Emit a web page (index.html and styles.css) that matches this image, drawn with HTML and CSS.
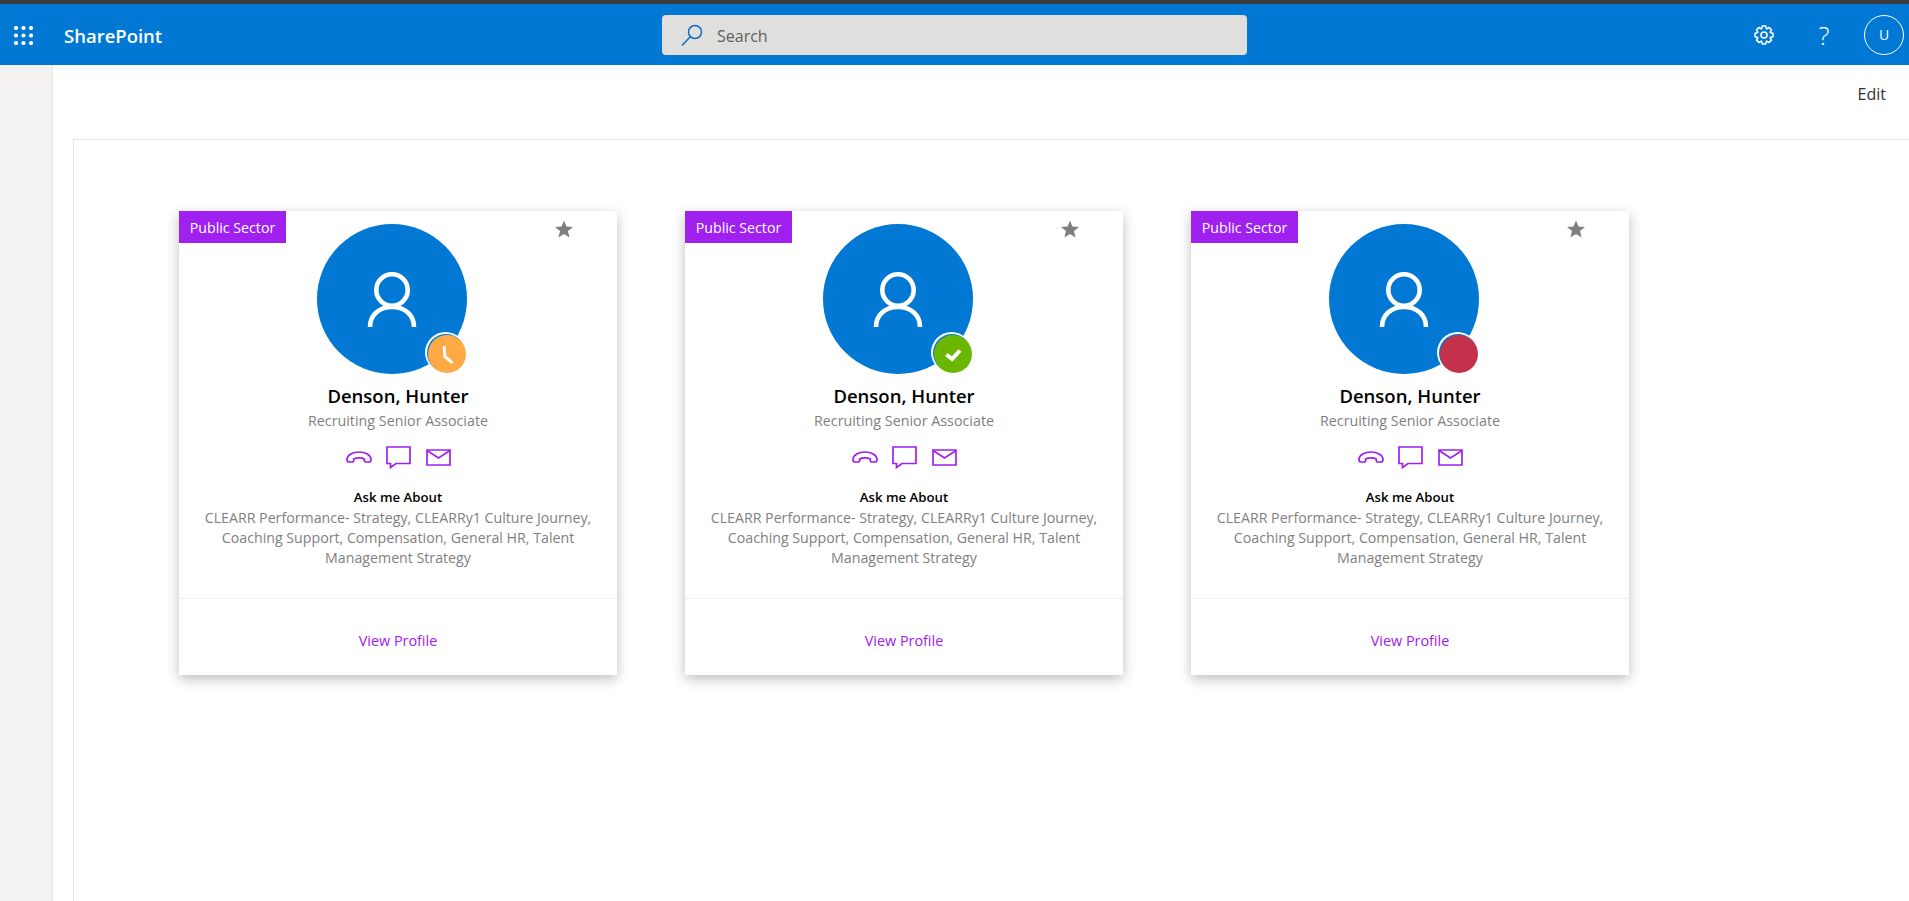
FILE: index.html
```html
<!DOCTYPE html>
<html lang="en">
<head>
    <meta charset="UTF-8">
    <title>SharePoint</title>
    <link rel="stylesheet" href="styles.css">
</head>
<body>
    <div class="topline"></div>
    <header class="suitebar">
        <div class="suite-left">
            <svg class="waffle" width="19" height="19" viewBox="0 0 19 19" fill="#fff">
                <circle cx="2" cy="2" r="2.100"/><circle cx="9.500" cy="2" r="2.100"/><circle cx="17" cy="2" r="2.100"/>
                <circle cx="2" cy="9.500" r="2.100"/><circle cx="9.500" cy="9.500" r="2.100"/><circle cx="17" cy="9.500" r="2.100"/>
                <circle cx="2" cy="17" r="2.100"/><circle cx="9.500" cy="17" r="2.100"/><circle cx="17" cy="17" r="2.100"/>
            </svg>
            <span class="brand">SharePoint</span>
        </div>
        <div class="searchbox">
            <svg width="24" height="24" viewBox="0 0 24 24" fill="none" stroke="#0f6cbd" stroke-width="1.500">
                <circle cx="15" cy="9" r="6.500"/>
                <path d="M10.500 13.500 2 22.500"/>
            </svg>
            <span class="search-text">Search</span>
        </div>
        <div class="suite-right">
            <svg class="gear" width="20" height="20" viewBox="0 0 22 22" fill="none" stroke="#fff" stroke-width="1.700" stroke-linejoin="round">
                <path d="M12.910 1.180 13.650 4.090 14.010 4.240 16.590 2.710 19.290 5.410 17.760 7.990 17.910 8.350 20.820 9.090V12.910L17.910 13.650 17.760 14.010 19.290 16.590 16.590 19.290 14.010 17.760 13.650 17.910 12.910 20.820H9.090L8.350 17.910 7.990 17.760 5.410 19.290 2.710 16.590 4.240 14.010 4.090 13.650 1.180 12.910V9.090L4.090 8.350 4.240 7.990 2.710 5.410 5.410 2.710 7.990 4.240 8.350 4.090 9.090 1.180z"/>
                <circle cx="11" cy="11" r="3.300"/>
            </svg>
            <span class="help">?</span>
            <span class="avatar">U</span>
        </div>
    </header>

    <div class="page">
        <aside class="rail"></aside>
        <main class="content">
            <div class="commandbar"><span>Edit</span></div>
            <section class="zone">
                <div class="cards">

                    <article class="card">
                        <span class="tag">Public Sector</span>
                        <svg class="star" width="18" height="18" viewBox="0 0 20 19" fill="#7f7f7f"><path d="M10 0l2.700 6.700 7.300.5-5.600 4.600 1.800 7.100L10 15l-6.200 3.900 1.800-7.100L0 7.200l7.300-.5z"/></svg>
                        <div class="photo">
                            <svg width="50" height="55" viewBox="0 0 50 55" fill="none" stroke="#fff" stroke-width="4.600">
                                <circle cx="25" cy="18" r="15.700"/>
                                <path d="M3 55c0-12 9-20 22-20s22 8 22 20"/>
                            </svg>
                            <span class="presence away">
                                <svg width="38" height="38" viewBox="0 0 38 38" fill="none" stroke="#fff" stroke-width="3" stroke-linecap="round" stroke-linejoin="round"><path d="M16.300 12.500 16.800 21.500 23.500 27"/></svg>
                            </span>
                        </div>
                        <h3 class="name">Denson, Hunter</h3>
                        <p class="role">Recruiting Senior Associate</p>
                        <div class="actions">
                            <svg width="26" height="12" viewBox="0 0 26 12" fill="none" stroke="#a020f0" stroke-width="1.700"><path d="M1 8.500C1 4 7 1 13 1s12 3 12 7.500c0 1.500-.8 2.500-2 2.500h-3c-1.200 0-1.700-.6-1.700-1.600V8c-1-.7-3-1.200-5.300-1.200S8.700 7.300 7.700 8v1.400c0 1-.5 1.600-1.700 1.600H3c-1.200 0-2-1-2-2.500z"/></svg>
                            <svg width="25" height="23" viewBox="0 0 25 23" fill="none" stroke="#a020f0" stroke-width="1.700"><path d="M1 1h23v16.500H10L4.500 21.500v-4H1z"/></svg>
                            <svg width="25" height="17" viewBox="0 0 25 17" fill="none" stroke="#a020f0" stroke-width="1.700"><path d="M1 1h23v15H1z"/><path d="M1 1.500l11.500 7.500L24 1.500"/></svg>
                        </div>
                        <h4 class="ask">Ask me About</h4>
                        <p class="topics">CLEARR Performance- Strategy, CLEARRy1 Culture Journey, Coaching Support, Compensation, General HR, Talent Management Strategy</p>
                        <div class="card-foot"><a href="#">View Profile</a></div>
                    </article>

                    <article class="card">
                        <span class="tag">Public Sector</span>
                        <svg class="star" width="18" height="18" viewBox="0 0 20 19" fill="#7f7f7f"><path d="M10 0l2.700 6.700 7.300.5-5.600 4.600 1.800 7.100L10 15l-6.200 3.900 1.800-7.100L0 7.200l7.300-.5z"/></svg>
                        <div class="photo">
                            <svg width="50" height="55" viewBox="0 0 50 55" fill="none" stroke="#fff" stroke-width="4.600">
                                <circle cx="25" cy="18" r="15.700"/>
                                <path d="M3 55c0-12 9-20 22-20s22 8 22 20"/>
                            </svg>
                            <span class="presence online">
                                <svg width="38" height="38" viewBox="0 0 38 38" fill="none" stroke="#fff" stroke-width="4"><path d="M12.500 19.500 18 24 26 15.500"/></svg>
                            </span>
                        </div>
                        <h3 class="name">Denson, Hunter</h3>
                        <p class="role">Recruiting Senior Associate</p>
                        <div class="actions">
                            <svg width="26" height="12" viewBox="0 0 26 12" fill="none" stroke="#a020f0" stroke-width="1.700"><path d="M1 8.500C1 4 7 1 13 1s12 3 12 7.500c0 1.500-.8 2.500-2 2.500h-3c-1.200 0-1.700-.6-1.700-1.600V8c-1-.7-3-1.200-5.300-1.200S8.700 7.300 7.700 8v1.400c0 1-.5 1.600-1.700 1.600H3c-1.200 0-2-1-2-2.500z"/></svg>
                            <svg width="25" height="23" viewBox="0 0 25 23" fill="none" stroke="#a020f0" stroke-width="1.700"><path d="M1 1h23v16.500H10L4.500 21.500v-4H1z"/></svg>
                            <svg width="25" height="17" viewBox="0 0 25 17" fill="none" stroke="#a020f0" stroke-width="1.700"><path d="M1 1h23v15H1z"/><path d="M1 1.500l11.500 7.500L24 1.500"/></svg>
                        </div>
                        <h4 class="ask">Ask me About</h4>
                        <p class="topics">CLEARR Performance- Strategy, CLEARRy1 Culture Journey, Coaching Support, Compensation, General HR, Talent Management Strategy</p>
                        <div class="card-foot"><a href="#">View Profile</a></div>
                    </article>

                    <article class="card">
                        <span class="tag">Public Sector</span>
                        <svg class="star" width="18" height="18" viewBox="0 0 20 19" fill="#7f7f7f"><path d="M10 0l2.700 6.700 7.300.5-5.600 4.600 1.800 7.100L10 15l-6.200 3.900 1.800-7.100L0 7.200l7.300-.5z"/></svg>
                        <div class="photo">
                            <svg width="50" height="55" viewBox="0 0 50 55" fill="none" stroke="#fff" stroke-width="4.600">
                                <circle cx="25" cy="18" r="15.700"/>
                                <path d="M3 55c0-12 9-20 22-20s22 8 22 20"/>
                            </svg>
                            <span class="presence busy"></span>
                        </div>
                        <h3 class="name">Denson, Hunter</h3>
                        <p class="role">Recruiting Senior Associate</p>
                        <div class="actions">
                            <svg width="26" height="12" viewBox="0 0 26 12" fill="none" stroke="#a020f0" stroke-width="1.700"><path d="M1 8.500C1 4 7 1 13 1s12 3 12 7.500c0 1.500-.8 2.500-2 2.500h-3c-1.200 0-1.700-.6-1.700-1.600V8c-1-.7-3-1.200-5.300-1.200S8.700 7.300 7.700 8v1.400c0 1-.5 1.600-1.700 1.600H3c-1.200 0-2-1-2-2.500z"/></svg>
                            <svg width="25" height="23" viewBox="0 0 25 23" fill="none" stroke="#a020f0" stroke-width="1.700"><path d="M1 1h23v16.500H10L4.500 21.500v-4H1z"/></svg>
                            <svg width="25" height="17" viewBox="0 0 25 17" fill="none" stroke="#a020f0" stroke-width="1.700"><path d="M1 1h23v15H1z"/><path d="M1 1.500l11.500 7.500L24 1.500"/></svg>
                        </div>
                        <h4 class="ask">Ask me About</h4>
                        <p class="topics">CLEARR Performance- Strategy, CLEARRy1 Culture Journey, Coaching Support, Compensation, General HR, Talent Management Strategy</p>
                        <div class="card-foot"><a href="#">View Profile</a></div>
                    </article>

                </div>
            </section>
        </main>
    </div>
</body>
</html>
```

FILE: styles.css
```css
html, body {
    height: 100%;
}
body {
    margin: 0;
    height: 901px;
    overflow: hidden;
    display: flex;
    flex-direction: column;
    background: #fff;
    font-family: "Open Sans", "Noto Sans", "Liberation Sans", sans-serif;
    color: #323130;
}
.topline {
    height: 4px;
    background: #3b3b3b;
}
.suitebar {
    height: 61px;
    background: #0078d4;
    display: flex;
    align-items: center;
    color: #fff;
}
.suite-left {
    display: flex;
    align-items: center;
    padding-left: 14px;
    width: 648px;
    gap: 31px;
    box-sizing: border-box;
    margin-right: 14px;
}
.waffle {
    margin-top: 1px;
}
.brand {
    font-size: 18.500px;
    font-weight: 600;
    padding-top: 2px;
}
.searchbox {
    width: 585px;
    height: 40px;
    margin-top: 1px;
    background: #e1dfdd;
    border-radius: 4px;
    display: flex;
    align-items: center;
    padding-left: 18px;
    gap: 13px;
    box-sizing: border-box;
    color: #605e5c;
    font-size: 16px;
}
.search-text {
    padding-top: 2px;
}
.suite-right {
    margin-left: auto;
    display: flex;
    align-items: center;
    padding-right: 5px;
}
.help {
    font-size: 26px;
    font-weight: 300;
    width: 20px;
    margin: 0 30px 0 40px;
    text-align: center;
}
.avatar {
    width: 40px;
    height: 40px;
    border: 1px solid #fff;
    border-radius: 50%;
    box-sizing: border-box;
    display: flex;
    align-items: center;
    justify-content: center;
    font-size: 14px;
}
.page {
    flex: 1;
    display: flex;
}
.rail {
    width: 52px;
    background: #f3f2f1;
    border-right: 1px solid #edebe9;
}
.content {
    flex: 1;
    display: flex;
    flex-direction: column;
    padding-left: 20px;
}
.commandbar {
    height: 74px;
    display: flex;
    justify-content: flex-end;
    align-items: flex-start;
    padding: 18px 23px 0 0;
    box-sizing: border-box;
    font-size: 16px;
}
.zone {
    flex: 1;
    border: 1px solid #e3e3e3;
    border-right: none;
    border-bottom: none;
    padding: 71px 0 0 105px;
}
.cards {
    display: flex;
    gap: 68px;
}
.card {
    width: 438px;
    height: 464px;
    background: #fff;
    box-shadow: 0 4px 12px rgba(0, 0, 0, 0.26);
    position: relative;
    text-align: center;
    display: flex;
    flex-direction: column;
    align-items: center;
}
.tag {
    position: absolute;
    left: 0;
    top: 0;
    width: 107px;
    height: 32px;
    box-sizing: border-box;
    background: #a020f0;
    color: #fff;
    font-size: 14.200px;
    line-height: 33px;
    white-space: nowrap;
}
.star {
    position: absolute;
    left: 376px;
    top: 9px;
}
.photo {
    width: 150px;
    height: 150px;
    margin: 13px 12px 0 0;
    background: #0078d4;
    border-radius: 50%;
    position: relative;
    display: flex;
    align-items: center;
    justify-content: center;
}
.presence {
    position: absolute;
    right: 1px;
    bottom: 1px;
    width: 38px;
    height: 38px;
    border-radius: 50%;
    box-shadow: -1px -1px 0 0 #0078d4, -1.500px -1.500px 0 1.500px #fff;
}
.presence svg {
    display: block;
}
.away { background: #ffaa44; }
.online { background: #6bb700; }
.busy { background: #c4314b; }
.name {
    margin: 10px 0 0;
    font-size: 18.500px;
    font-weight: 600;
    line-height: 24px;
    color: #000;
}
.role {
    margin: 3px 0 0;
    font-size: 14.300px;
    line-height: 20px;
    color: #7f7f7f;
}
.actions {
    display: flex;
    align-items: center;
    gap: 14.500px;
    margin-top: 13px;
    height: 26px;
}
.ask {
    margin: 18px 0 0;
    font-size: 13.200px;
    font-weight: 600;
    line-height: 18px;
    color: #000;
}
.topics {
    margin: 2px 0 0;
    width: 400px;
    font-size: 14.200px;
    line-height: 20px;
    color: #7f7f7f;
}
.card-foot {
    margin-top: auto;
    width: 100%;
    height: 77px;
    border-top: 1px solid #eee;
    box-sizing: border-box;
    padding-top: 6px;
    display: flex;
    align-items: center;
    justify-content: center;
}
.card-foot a {
    color: #a020f0;
    font-size: 14.400px;
    text-decoration: none;
}
```
